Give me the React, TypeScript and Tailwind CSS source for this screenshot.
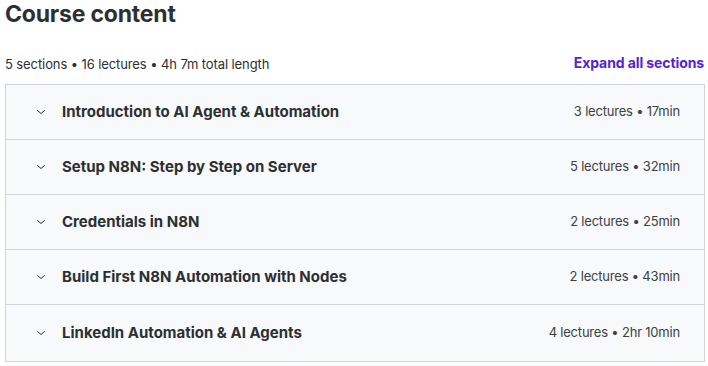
const sections = [
  { title: "Introduction to AI Agent & Automation", meta: "3 lectures • 17min" },
  { title: "Setup N8N: Step by Step on Server", meta: "5 lectures • 32min" },
  { title: "Credentials in N8N", meta: "2 lectures • 25min" },
  { title: "Build First N8N Automation with Nodes", meta: "2 lectures • 43min" },
  { title: "LinkedIn Automation & AI Agents", meta: "4 lectures • 2hr 10min" },
];

function Chevron() {
  return (
    <svg width="12" height="12" viewBox="0 0 12 12" fill="none" className="shrink-0">
      <path d="M2.5 4.5 6 7.5 9.5 4.5" stroke="#2d2f31" strokeWidth="1" strokeLinecap="round" strokeLinejoin="round" />
    </svg>
  );
}

export default function App() {
  return (
    <div className="w-[708px] h-[366px] bg-white text-[#2d2f31] font-['Inter',sans-serif] overflow-hidden">
      <h2 className="pl-[5px] text-[23px] leading-[28px] font-bold tracking-[-0.2px]">Course content</h2>
      <div className="flex items-end justify-between pl-[5px] pr-[4px] mt-[22px] h-[34px]">
        <span className="text-[13px] leading-[20px] pb-[10px] tracking-[-0.1px]">5 sections • 16 lectures • 4h 7m total length</span>
        <button className="text-[14px] leading-[20px] font-bold text-[#5624d0] pb-[11px] tracking-[-0.1px]">Expand all sections</button>
      </div>
      <div className="ml-[5px] mr-[3px] border border-[#d1d2e0]">
        {sections.map((s, i) => (
          <div
            key={s.title}
            className={`flex items-center bg-[#f7f9fa] pl-[29px] pr-[24px] ${i < sections.length - 1 ? "h-[55px] border-b border-[#d1d2e0]" : "h-[56px]"}`}
          >
            <Chevron />
            <span className="ml-[15px] flex-1 text-[15px] font-bold">{s.title}</span>
            <span className="text-[13px] tracking-[-0.2px] text-[#3e4143]">{s.meta}</span>
          </div>
        ))}
      </div>
    </div>
  );
}
